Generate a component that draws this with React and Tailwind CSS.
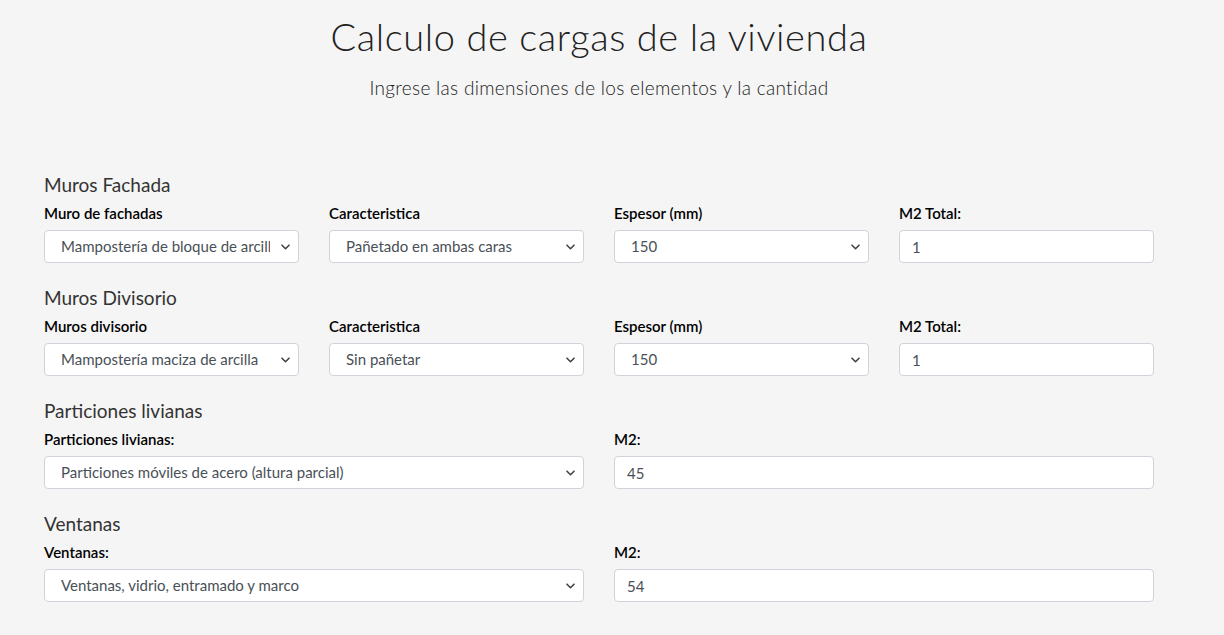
import React from 'react';

function Chevron() {
  return (
    <svg
      className="pointer-events-none absolute right-[9px] top-1/2 -translate-y-1/2"
      width="9"
      height="6"
      viewBox="0 0 9 6"
      fill="none"
    >
      <path d="M1 1.2l3.5 3.5 3.5-3.5" stroke="#444" strokeWidth="1.6" strokeLinecap="round" strokeLinejoin="round" />
    </svg>
  );
}

function Select({ value }) {
  return (
    <div className="relative">
      <select
        defaultValue={value}
        className="w-full h-[33px] appearance-none bg-white border border-[#ced4da] rounded-[4px] pl-[16px] pr-[28px] text-[15px] text-[#495057] outline-none"
      >
        <option value={value}>{value}</option>
      </select>
      <Chevron />
    </div>
  );
}

function Input({ value }) {
  return (
    <input
      type="text"
      defaultValue={value}
      className="w-full h-[33px] bg-white border border-[#ced4da] rounded-[4px] px-[12px] text-[15px] text-[#495057] outline-none"
    />
  );
}

function Field({ label, children, wide }) {
  return (
    <div className={wide ? 'col-span-2' : ''}>
      <label className="block text-[15px] leading-[20px] font-semibold text-black mb-[7px]">{label}</label>
      {children}
    </div>
  );
}

function Section({ title, children }) {
  return (
    <div className="mb-[23px]">
      <h5 className="text-[19px] leading-[24px] text-[#333] mb-[6px]">{title}</h5>
      <div className="grid grid-cols-4 gap-x-[30px]">{children}</div>
    </div>
  );
}

export default function App() {
  return (
    <div className="min-h-screen bg-[#f5f5f5] font-['Lato',sans-serif]">
      <div className="w-[1110px] ml-[44px]">
        <div className="text-center pt-[15px]">
          <h1 className="text-[38px] leading-[43px] tracking-[0.6px] font-light text-[#222]">
            Calculo de cargas de la vivienda
          </h1>
          <p className="mt-[16px] text-[19px] leading-[27px] tracking-[0.3px] font-light text-[#222]">
            Ingrese las dimensiones de los elementos y la cantidad
          </p>
        </div>

        <div className="mt-[72px]">
          <Section title="Muros Fachada">
            <Field label="Muro de fachadas">
              <Select value="Mampostería de bloque de arcilla" />
            </Field>
            <Field label="Caracteristica">
              <Select value="Pañetado en ambas caras" />
            </Field>
            <Field label="Espesor (mm)">
              <Select value="150" />
            </Field>
            <Field label="M2 Total:">
              <Input value="1" />
            </Field>
          </Section>

          <Section title="Muros Divisorio">
            <Field label="Muros divisorio">
              <Select value="Mampostería maciza de arcilla" />
            </Field>
            <Field label="Caracteristica">
              <Select value="Sin pañetar" />
            </Field>
            <Field label="Espesor (mm)">
              <Select value="150" />
            </Field>
            <Field label="M2 Total:">
              <Input value="1" />
            </Field>
          </Section>

          <Section title="Particiones livianas">
            <Field label="Particiones livianas:" wide>
              <Select value="Particiones móviles de acero (altura parcial)" />
            </Field>
            <Field label="M2:" wide>
              <Input value="45" />
            </Field>
          </Section>

          <Section title="Ventanas">
            <Field label="Ventanas:" wide>
              <Select value="Ventanas, vidrio, entramado y marco" />
            </Field>
            <Field label="M2:" wide>
              <Input value="54" />
            </Field>
          </Section>
        </div>
      </div>
    </div>
  );
}
